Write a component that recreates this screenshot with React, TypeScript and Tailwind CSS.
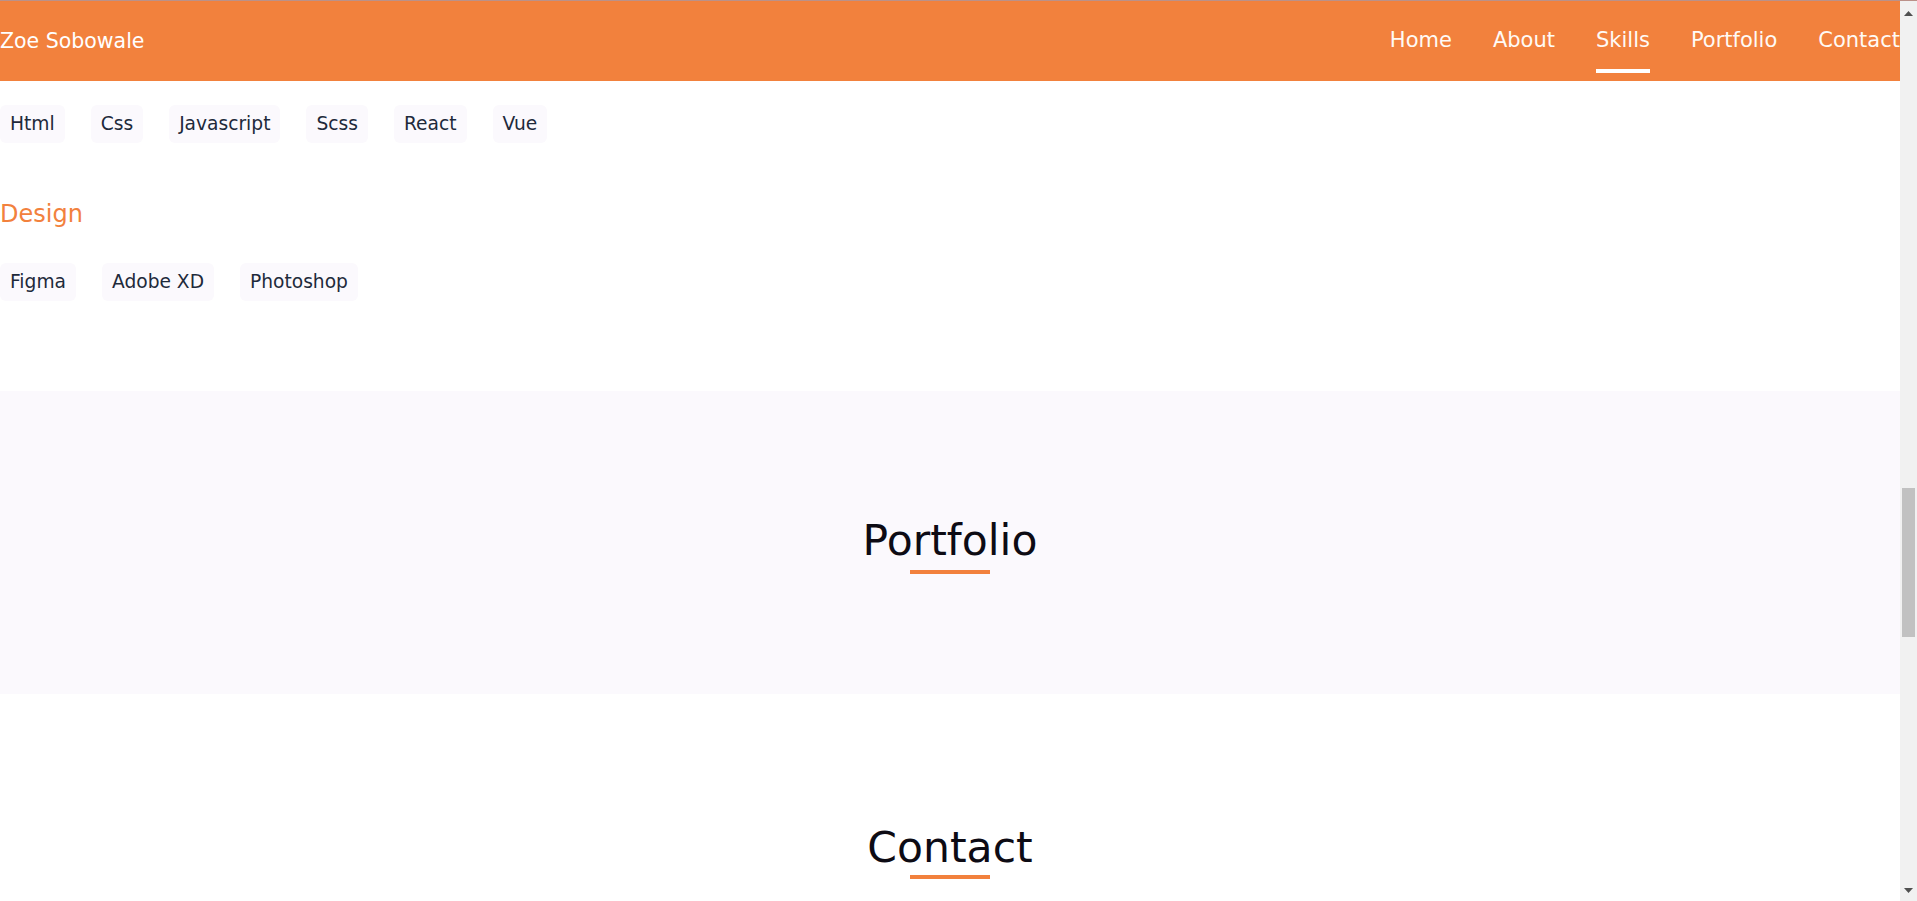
const navLinks = ["Home", "About", "Skills", "Portfolio", "Contact"];
const frontend = ["Html", "Css", "Javascript", "Scss", "React", "Vue"];
const design = ["Figma", "Adobe XD", "Photoshop"];

const Tag = ({ label }: { label: string }) => (
  <span className="h-[38px] px-[10px] flex items-center rounded-md bg-[#fbf9fd] text-[#1e2a3b] text-[18.65px]">
    {label}
  </span>
);

const SectionTitle = ({ title, gap }: { title: string; gap: string }) => (
  <div className="flex flex-col items-center">
    <h2 className="text-[42.5px] leading-[50px] font-normal text-[#0d0b14]">{title}</h2>
    <span className={`${gap} w-20 h-1 bg-[#f2813d]`} />
  </div>
);

const Scrollbar = () => (
  <div className="w-[17px] h-full bg-[#f1f1f1] flex flex-col items-center">
    <svg width="9" height="5" viewBox="0 0 9 5" className="mt-[10px]">
      <polygon points="0,5 4.5,0 9,5" fill="#505050" />
    </svg>
    <div className="mt-[472px] w-[13px] h-[149px] bg-[#c1c1c1]" />
    <div className="flex-1" />
    <svg width="9" height="5" viewBox="0 0 9 5" className="mb-[8px]">
      <polygon points="0,0 9,0 4.5,5" fill="#505050" />
    </svg>
  </div>
);

export default function App() {
  return (
    <div className="w-full h-[901px] overflow-hidden bg-white font-['DejaVu_Sans',sans-serif]">
      <div className="h-px bg-[#bb9189]" />
      <div className="flex h-[900px]">
        <main className="flex-1 min-w-0 overflow-hidden">
          <header className="h-20 bg-[#f2813d] flex items-center justify-between text-white">
            <span className="text-[20.5px]">Zoe Sobowale</span>
            <nav className="h-full flex items-center gap-[41px]">
              {navLinks.map((link) => (
                <a key={link} className="relative h-full flex items-center text-[21px] text-[#fffaf5]">
                  {link}
                  {link === "Skills" && (
                    <span className="absolute left-0 right-0 bottom-2 h-1 bg-white" />
                  )}
                </a>
              ))}
            </nav>
          </header>

          <section>
            <div className="mt-6 flex gap-[26px]">
              {frontend.map((t) => (
                <Tag key={t} label={t} />
              ))}
            </div>
            <h3 className="mt-[57px] text-[24px] leading-[28px] text-[#f2813d]">Design</h3>
            <div className="mt-[35px] flex gap-[26px]">
              {design.map((t) => (
                <Tag key={t} label={t} />
              ))}
            </div>
          </section>

          <section className="mt-[90px] h-[303px] bg-[#fbf9fd] pt-[125px]">
            <SectionTitle title="Portfolio" gap="mt-[4px]" />
          </section>

          <section className="pt-[129px]">
            <SectionTitle title="Contact" gap="mt-[2px]" />
          </section>
        </main>
        <Scrollbar />
      </div>
    </div>
  );
}
